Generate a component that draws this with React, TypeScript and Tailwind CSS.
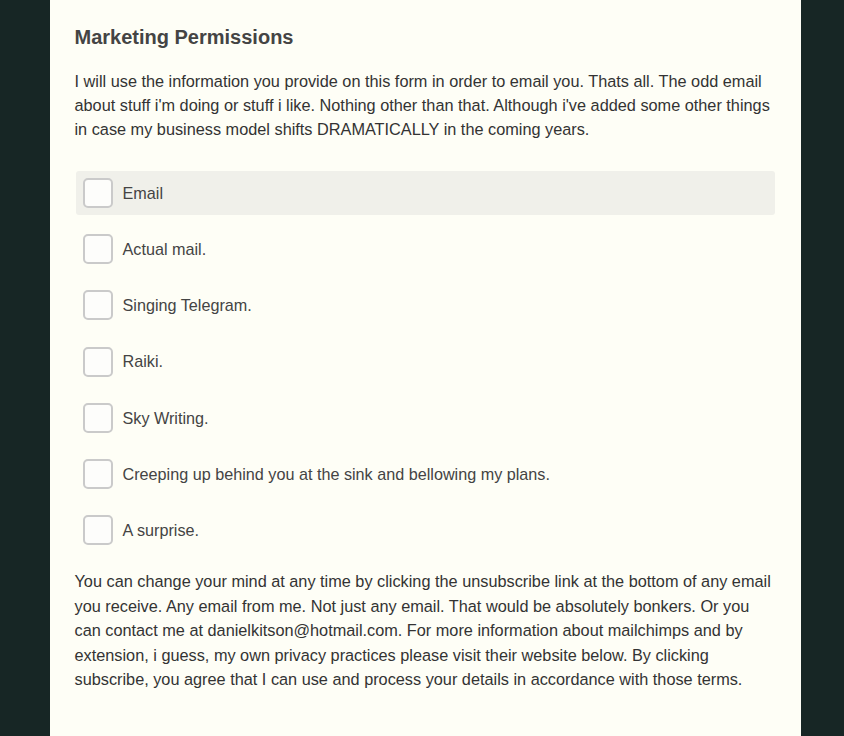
import React from "react";

const options = [
  "Email",
  "Actual mail.",
  "Singing Telegram.",
  "Raiki.",
  "Sky Writing.",
  "Creeping up behind you at the sink and bellowing my plans.",
  "A surprise.",
];

export default function App() {
  return (
    <div className="h-[736px] overflow-hidden bg-[#172625] flex justify-center">
      <div
        className="ml-[6px] w-[751px] bg-[#fefef6] px-[25px] pt-[25px] text-[#333333]"
        style={{ fontFamily: '"Liberation Sans", Arial, sans-serif' }}
      >
        <h2 className="text-[20px] leading-[24px] font-bold text-[#444444]">
          Marketing Permissions
        </h2>
        <p className="mt-[20px] text-[16.3px] leading-[24px]">
          I will use the information you provide on this form in order to email you. Thats all. The odd email about stuff i'm doing or stuff i like. Nothing other than that. Although i've added some other things in case my business model shifts DRAMATICALLY in the coming years.
        </p>
        <div className="mt-[30px] flex flex-col">
          {options.map((o, i) => (
            <div
              key={o}
              className={
                "h-[44px] mb-[12.2px] mx-[1px] rounded-[3px] flex items-center pl-[7px] " +
                (i === 0 ? "bg-[#f0f0ea]" : "")
              }
            >
              <div className="w-[30px] h-[30px] rounded-[5px] border-2 border-[#cacaca] bg-[#fdfdfb]" />
              <span className="ml-[10px] text-[16.2px] text-[#444444]">{o}</span>
            </div>
          ))}
        </div>
        <p className="mt-[5px] text-[16.3px] leading-[24.5px]">
          You can change your mind at any time by clicking the unsubscribe link at the bottom of any email you receive. Any email from me. Not just any email. That would be absolutely bonkers. Or you can contact me at danielkitson@hotmail.com. For more information about mailchimps and by extension, i guess, my own privacy practices please visit their website below. By clicking subscribe, you agree that I can use and process your details in accordance with those terms.
        </p>
      </div>
    </div>
  );
}
